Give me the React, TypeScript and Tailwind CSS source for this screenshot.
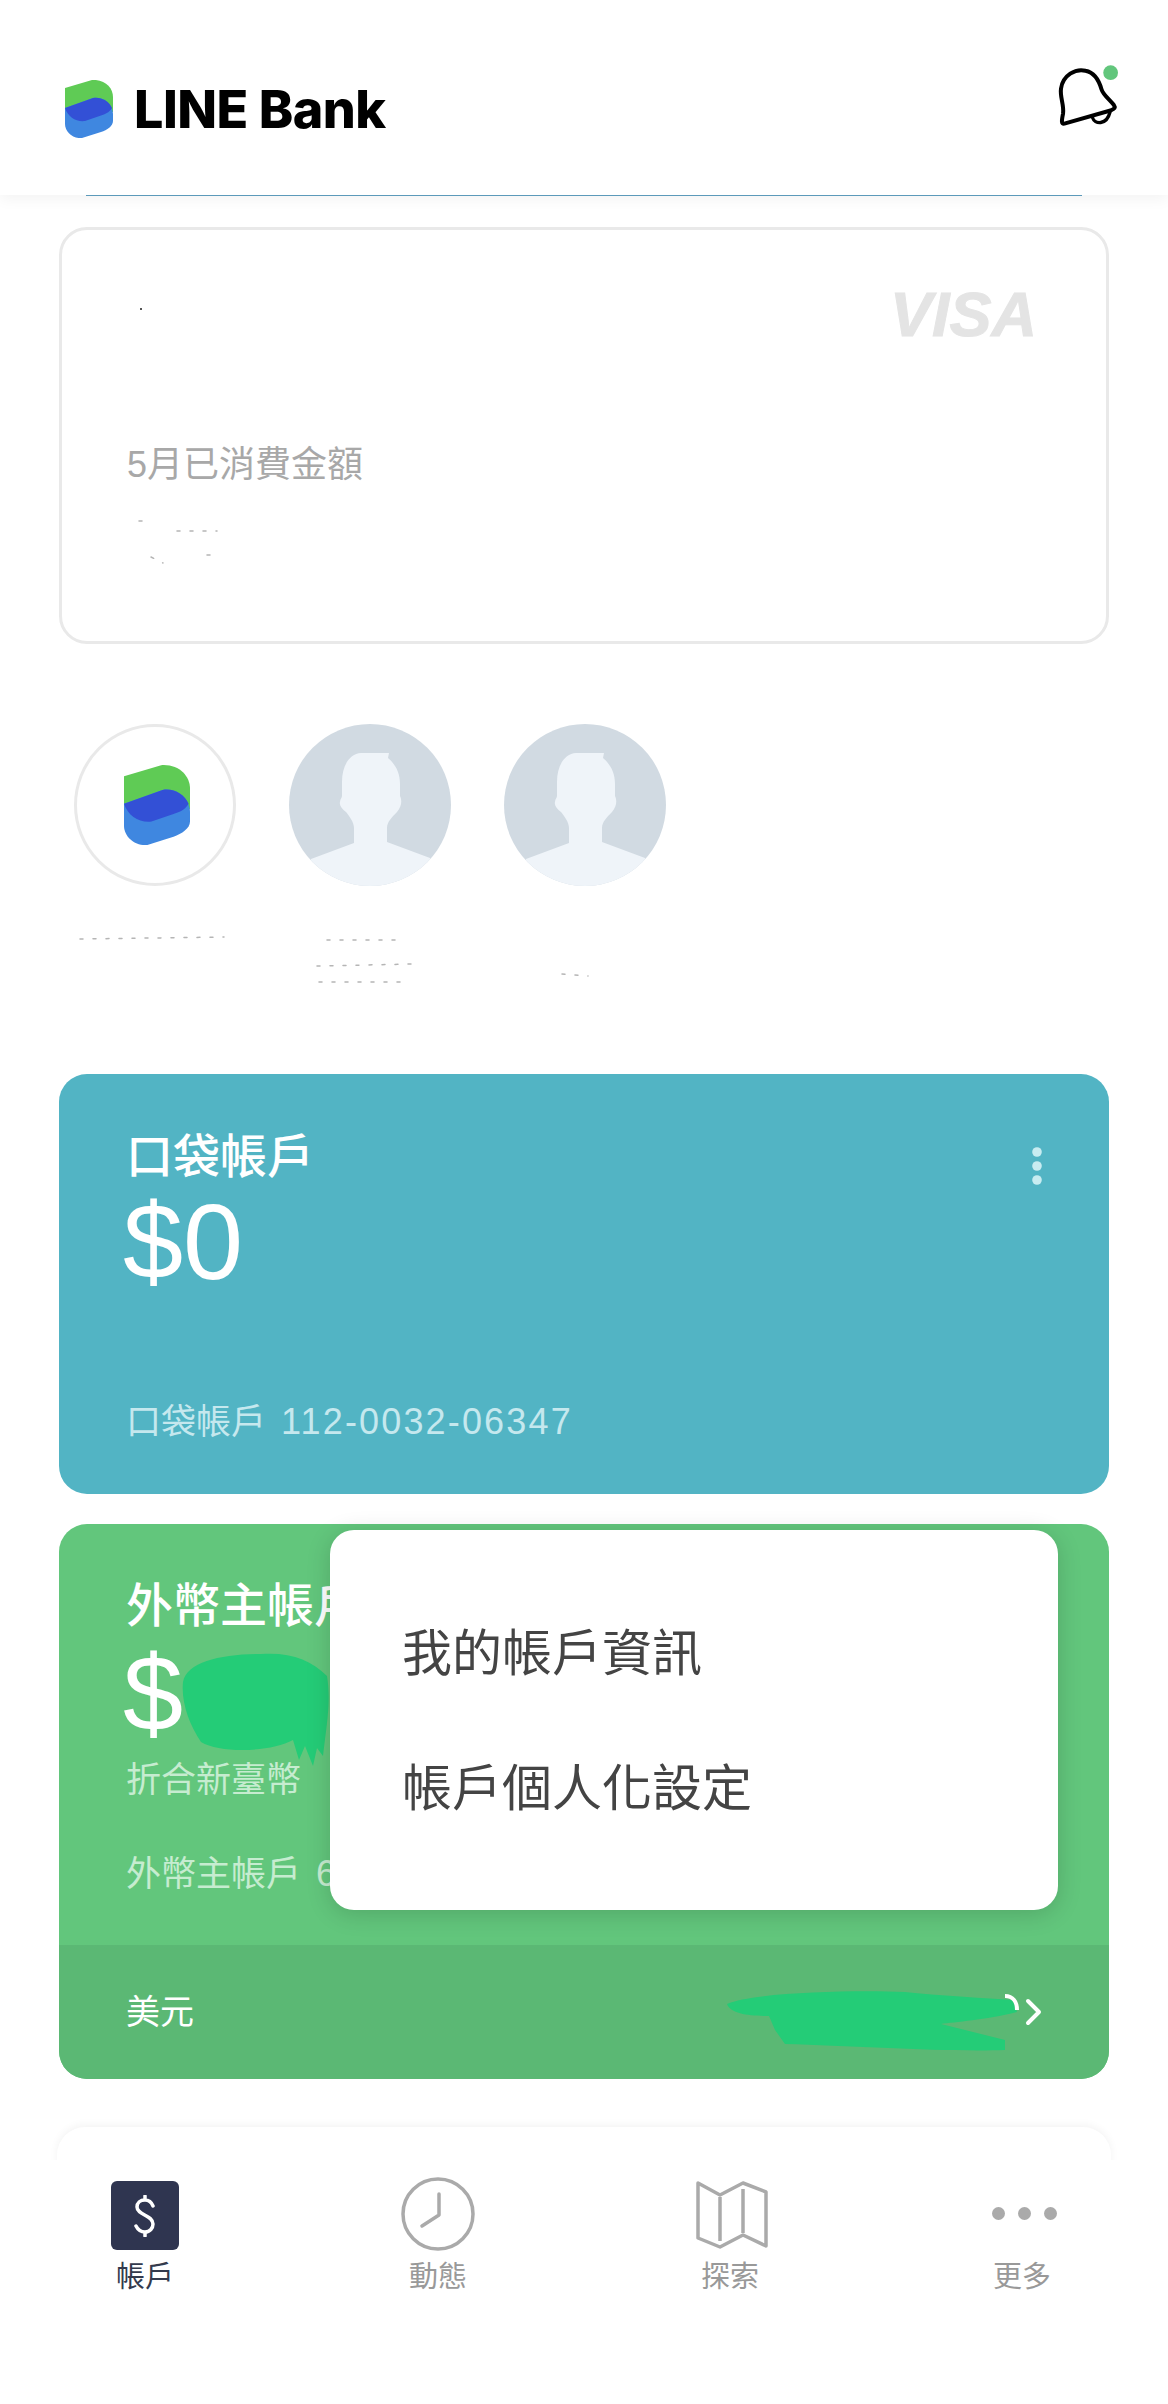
import React from "react";

function Logo({ className }: { className: string }) {
  return (
    <svg viewBox="0 0 48 58" className={className}>
      <path d="M0 8 L27 0 C40 -1 48 8 48 17 L48 32 L0 32 Z" fill="#5fcb55" />
      <path d="M0 28 L28 18 C40 16 48 26 48 34 L48 41 C48 46 42 50 36 52 L17 58 C8 59 0 52 0 44 Z" fill="#3f87e0" />
      <path d="M0 28 L28 18 C36 16.500 44 21 47 28 C44 33 40 34 36 35.500 L20 41 C11 42 3 37 0 28 Z" fill="#3350d6" />
    </svg>
  );
}

function Avatar() {
  return (
    <div className="w-[162px] h-[162px] rounded-full overflow-hidden bg-[#d1dae2]">
      <svg viewBox="0 0 162 162" className="w-full h-full">
        <path
          d="M22 135 L65 119 L65 104 C65 98 60 92 57 88 C53 85 50 81 51 78 C51 75 53 74 53 72 L53 58 C53 42 60 30 72 29 L100 29 L99 34 C106 40 111 48 111 60 L111 72 C113 76 113 82 108 88 C103 93 98 98 98 104 L98 118 L141 134 L141 162 L22 162 Z"
          fill="#eff4f9"
        />
      </svg>
    </div>
  );
}

function Traces({ d, w, h }: { d: string; w: number; h: number }) {
  return (
    <svg width={w} height={h} viewBox={`0 0 ${w} ${h}`} className="block">
      <path d={d} stroke="#b5b5b5" strokeWidth="1.500" fill="none" strokeLinecap="round" strokeDasharray="3 10" />
    </svg>
  );
}

function Kebab({ color }: { color: string }) {
  return (
    <svg width="12" height="40" viewBox="0 0 12 40" className="absolute top-[72px] right-[66px]">
      <circle cx="6" cy="6" r="4.800" fill={color} />
      <circle cx="6" cy="20" r="4.800" fill={color} />
      <circle cx="6" cy="34" r="4.800" fill={color} />
    </svg>
  );
}

export default function App() {
  return (
    <div className="relative w-[1168px] h-[2404px] overflow-hidden bg-white [font-family:'Liberation_Sans','Noto_Sans_CJK_TC',sans-serif]">
      <header className="relative z-10 h-[195px] bg-white shadow-[0_4px_14px_rgba(0,0,0,0.05)] flex justify-between pl-[65px] pr-[49px]">
        <div className="flex items-start pt-[80px]">
          <Logo className="w-[48px] h-[58px]" />
          <span className="ml-[21px] text-[52px] leading-[60px] font-extrabold tracking-[-0.5px] text-black [font-family:Inter,sans-serif]">
            LINE Bank
          </span>
        </div>
        <svg viewBox="110 45 185 185" className="w-[62px] h-[62px] mt-[65px]">
          <path
            d="M132 220 C122 222 124 210 128 190 C132 165 118 140 122 115 C128 75 165 55 195 62 C225 68 238 100 243 118 C248 135 270 150 280 165 C285 172 282 176 272 180 Z"
            fill="none"
            stroke="#000"
            strokeWidth="12"
            strokeLinejoin="round"
          />
          <path d="M216 202 C222 222 258 226 268 186" fill="none" stroke="#000" strokeWidth="10" strokeLinecap="round" />
          <circle cx="270" cy="68" r="22" fill="#62c67c" />
        </svg>
      </header>

      <div className="mx-[86px] h-px bg-[#5f9fc0]" />

      <main className="px-[59px]">
        <section className="relative mt-[31px] h-[417px] rounded-[28px] border-[3px] border-[#e9e9e9] bg-white pl-[65px] pt-[213px]">
          <span className="absolute top-[46px] right-[69px] text-[63px] leading-[76px] font-bold italic text-[#e4e4e4] [-webkit-text-stroke:1px_#e4e4e4]">
            VISA
          </span>
          <div className="absolute top-[78px] left-[78px] w-[2px] h-[2px] bg-[#555]" />
          <p className="text-[36px] leading-[44px] text-[#a8a8a8]">5月已消費金額</p>
          <div className="mt-[30px] ml-[10px]">
            <Traces w={90} h={50} d="M2 4 L14 4 M40 14 L80 14 M14 40 L26 46 M70 38 L80 38" />
          </div>
        </section>

        <section className="mt-[80px] ml-[15px] flex gap-[53px]">
          <div className="w-[162px]">
            <div className="w-[162px] h-[162px] rounded-full border-[3px] border-[#e9e9e9] flex items-center justify-center pl-[3px]">
              <Logo className="w-[66px] h-[84px]" />
            </div>
            <div className="mt-[46px]">
              <Traces w={162} h={10} d="M6 7 L150 5" />
            </div>
          </div>
          <div className="w-[162px]">
            <Avatar />
            <div className="mt-[46px] ml-[24px]">
              <Traces w={110} h={56} d="M14 8 L90 8 M4 34 L100 32 M6 50 L90 50" />
            </div>
          </div>
          <div className="w-[162px]">
            <Avatar />
            <div className="mt-[86px] ml-[56px]">
              <Traces w={30} h={6} d="M2 2 L28 4" />
            </div>
          </div>
        </section>

        <section className="relative mt-[86px] h-[420px] rounded-[28px] bg-[#52b4c4] flex flex-col pl-[67px] pt-[55px] pb-[50px]">
          <Kebab color="#c8ecf1" />
          <h2 className="text-[47px] leading-[56px] font-medium text-white">口袋帳戶</h2>
          <p className="mt-[5px] -ml-[3px] text-[108px] leading-[104px] text-white">$0</p>
          <p className="mt-auto text-[35px] leading-[44px] text-[#c5e8ee]">
            口袋帳戶
            <span className="ml-[15px] text-[36px] tracking-[0.06em]">112-0032-06347</span>
          </p>
        </section>

        <section className="relative mt-[30px] h-[555px] rounded-[28px] bg-[#62c67c] flex flex-col">
          <div className="flex-1 pl-[67px] pt-[54px]">
            <h2 className="text-[47px] leading-[56px] font-medium text-white">外幣主帳戶</h2>
            <p className="mt-[8px] -ml-[3px] text-[108px] leading-[104px] text-white">$</p>
            <p className="mt-[12px] text-[35px] leading-[44px] text-[#c6ecd0]">折合新臺幣</p>
            <p className="mt-[50px] text-[35px] leading-[44px] text-[#c6ecd0]">
              外幣主帳戶<span className="ml-[15px] text-[36px]">6</span>
            </p>
          </div>
          <div className="h-[134px] rounded-b-[28px] bg-[#5bb874] flex items-center justify-between pl-[67px] pr-[66px]">
            <span className="text-[34px] leading-[44px] text-white">美元</span>
            <svg width="18" height="28" viewBox="0 0 18 28">
              <path d="M3 3 L14 14 L3 25" fill="none" stroke="#fff" strokeWidth="4" strokeLinecap="round" strokeLinejoin="round" />
            </svg>
          </div>

          <svg width="150" height="116" viewBox="0 0 150 116" className="absolute left-[122px] top-[128px]">
            <path
              d="M2 30 C6 10 40 2 80 2 C110 0 130 8 146 24 C150 50 146 70 142 104 L136 96 L132 114 L124 94 L118 108 L112 88 C90 100 40 102 20 90 C8 72 0 50 2 30 Z"
              fill="#24cc77"
            />
          </svg>
          <svg width="296" height="64" viewBox="0 0 296 64" className="absolute left-[666px] top-[466px]">
            <path
              d="M2 14 C30 2 130 0 180 2 C220 6 260 8 288 10 L292 22 C260 30 230 32 216 34 L280 50 L280 60 C220 62 130 56 60 54 L50 40 L44 26 C24 26 6 24 2 14 Z"
              fill="#24cc77"
            />
            <path d="M280 6 C288 6 292 12 292 20" fill="none" stroke="#fff" strokeWidth="4" />
          </svg>

          <div className="absolute left-[271px] top-[6px] w-[728px] h-[380px] rounded-[24px] bg-white shadow-[0_4px_24px_rgba(0,0,0,0.16)] pl-[72px] pt-[94px]">
            <p className="text-[50px] leading-[60px] text-[#444444]">我的帳戶資訊</p>
            <p className="mt-[75px] text-[50px] leading-[60px] text-[#444444]">帳戶個人化設定</p>
          </div>
        </section>

        <div className="mt-[48px] h-[80px] -mx-[2px] rounded-t-[28px] bg-white shadow-[0_-2px_8px_rgba(0,0,0,0.05)]" />
      </main>

      <nav className="absolute left-0 right-0 bottom-0 h-[244px] bg-white grid grid-cols-4 pt-[18px]">
        <div className="flex flex-col items-center -ml-[2px]">
          <div className="w-[68px] h-[69px] mt-[3px] rounded-[6px] bg-[#2f3550] flex items-center justify-center">
            <svg width="26" height="42" viewBox="0 0 26 42">
              <path
                d="M21 11 C19 6 15 5 13 5 C8 5 5 8 5 12 C5 20 21 20 21 29 C21 33 18 37 13 37 C9 37 6 35 4 31 M13 1 L13 5 M13 37 L13 41"
                fill="none"
                stroke="#fff"
                strokeWidth="3.500"
                strokeLinecap="round"
              />
            </svg>
          </div>
          <span className="mt-[9px] text-[29px] leading-[36px] text-[#333a4d]">帳戶</span>
        </div>
        <div className="flex flex-col items-center">
          <svg width="74" height="74" viewBox="0 0 74 74" className="-mt-px -mb-px">
            <circle cx="37" cy="37" r="35" fill="none" stroke="#aaaaaa" strokeWidth="3.500" />
            <path d="M38 17 L38 38 L21 49" fill="none" stroke="#aaaaaa" strokeWidth="3.500" strokeLinecap="round" strokeLinejoin="round" />
          </svg>
          <span className="mt-[9px] text-[29px] leading-[36px] text-[#999999]">動態</span>
        </div>
        <div className="flex flex-col items-center">
          <svg width="72" height="68" viewBox="0 0 72 68" className="mt-[3px] mb-px ml-[3px]">
            <path
              d="M2 2 L24 14 L47 2 L70 11 L70 65 L47 54 L24 66 L2 57 Z M24 16 L24 60 M47 8 L47 52"
              fill="none"
              stroke="#aaaaaa"
              strokeWidth="3.500"
              strokeLinejoin="round"
            />
          </svg>
          <span className="mt-[9px] text-[29px] leading-[36px] text-[#999999]">探索</span>
        </div>
        <div className="flex flex-col items-center">
          <div className="h-[72px] flex items-center gap-[13px] ml-[4px] pb-[2px]">
            <div className="w-[13px] h-[13px] rounded-full bg-[#aaaaaa]" />
            <div className="w-[13px] h-[13px] rounded-full bg-[#aaaaaa]" />
            <div className="w-[13px] h-[13px] rounded-full bg-[#aaaaaa]" />
          </div>
          <span className="mt-[9px] text-[29px] leading-[36px] text-[#999999]">更多</span>
        </div>
      </nav>
    </div>
  );
}
